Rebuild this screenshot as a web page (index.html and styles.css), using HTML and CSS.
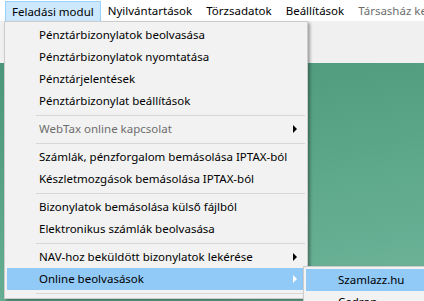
FILE: index.html
```html
<!DOCTYPE html>
<html lang="hu">
<head>
  <meta charset="UTF-8" />
  <title>Feladási modul</title>
  <link rel="stylesheet" href="styles.css">
</head>
<body>
  <div class="menubar">
    <div class="bar-item open">Feladási modul</div>
    <div class="bar-item">Nyilvántartások</div>
    <div class="bar-item">Törzsadatok</div>
    <div class="bar-item">Beállítások</div>
    <div class="bar-item disabled">Társasház kezelés</div>
  </div>

  <div class="workspace">
    <div class="toolbar"></div>
    <div class="desk"></div>
  </div>

  <!-- legördülő menü -->
  <div class="menu main-menu">
    <div class="item">Pénztárbizonylatok beolvasása</div>
    <div class="item">Pénztárbizonylatok nyomtatása</div>
    <div class="item">Pénztárjelentések</div>
    <div class="item">Pénztárbizonylat beállítások</div>
    <div class="sep"></div>
    <div class="item disabled sub">WebTax online kapcsolat<span class="arrow"></span></div>
    <div class="sep"></div>
    <div class="item">Számlák, pénzforgalom bemásolása IPTAX-ból</div>
    <div class="item">Készletmozgások bemásolása IPTAX-ból</div>
    <div class="sep"></div>
    <div class="item">Bizonylatok bemásolása külső fájlból</div>
    <div class="item">Elektronikus számlák beolvasása</div>
    <div class="sep"></div>
    <div class="item sub">NAV-hoz beküldött bizonylatok lekérése<span class="arrow"></span></div>
    <div class="item sub hot">Online beolvasások<span class="arrow"></span></div>
    <div class="sep"></div>
  </div>

  <!-- almenü -->
  <div class="menu sub-menu">
    <div class="item hot">Szamlazz.hu</div>
    <div class="item">Cedron</div>
  </div>
</body>
</html>
```

FILE: styles.css
```css
html, body {
  margin: 0;
  padding: 0;
  width: 424px;
  height: 301px;
  overflow: hidden;
  font-family: 'Noto Sans', 'Open Sans', sans-serif;
  font-size: 11.5px;
  color: #000;
}

.menubar {
  display: flex;
  height: 21px;
  padding-left: 5px;
  background: #fff;
  white-space: nowrap;
}

.bar-item {
  padding: 0 6px;
  line-height: 19px;
  margin-top: 1px;
  height: 19px;
  border: 1px solid transparent;
  border-top: none;
}

.bar-item.open {
  background: #cce8ff;
  border-color: #99d1ff;
  border-top: 1px solid #99d1ff;
}

.bar-item.disabled {
  color: #6d6d6d;
}

.workspace {
  height: 280px;
  display: flex;
  flex-direction: column;
}

.toolbar {
  height: 42px;
  background: #f0f0f0;
}

.desk {
  flex: 1;
  background: linear-gradient(170deg, #4c967b 0%, #5aa588 45%, #6fb59b 100%);
}

.menu {
  position: absolute;
  box-sizing: border-box;
  background: #f2f2f2;
  border: 1px solid #cccccc;
  padding: 2px;
  box-shadow: 2px 2px 3px rgba(0, 0, 0, 0.35);
  white-space: nowrap;
}

.main-menu {
  left: 4px;
  top: 21px;
  width: 304px;
}

.sub-menu {
  left: 303px;
  top: 266px;
  width: 140px;
}

.item {
  position: relative;
  height: 22px;
  line-height: 22px;
  padding-left: 32px;
}

.item.disabled {
  color: #6d6d6d;
}

.item.hot {
  background: #91c9f7;
}

.sep {
  height: 6px;
  position: relative;
}

.sep::after {
  content: '';
  position: absolute;
  left: 29px;
  right: 0;
  top: 3px;
  height: 1px;
  background: #d7d7d7;
}

.arrow {
  position: absolute;
  right: 8px;
  top: 7px;
  width: 0;
  height: 0;
  border-left: 4px solid #000;
  border-top: 4px solid transparent;
  border-bottom: 4px solid transparent;
}

.item.hot .arrow {
  border-left-color: #fff;
}
```
